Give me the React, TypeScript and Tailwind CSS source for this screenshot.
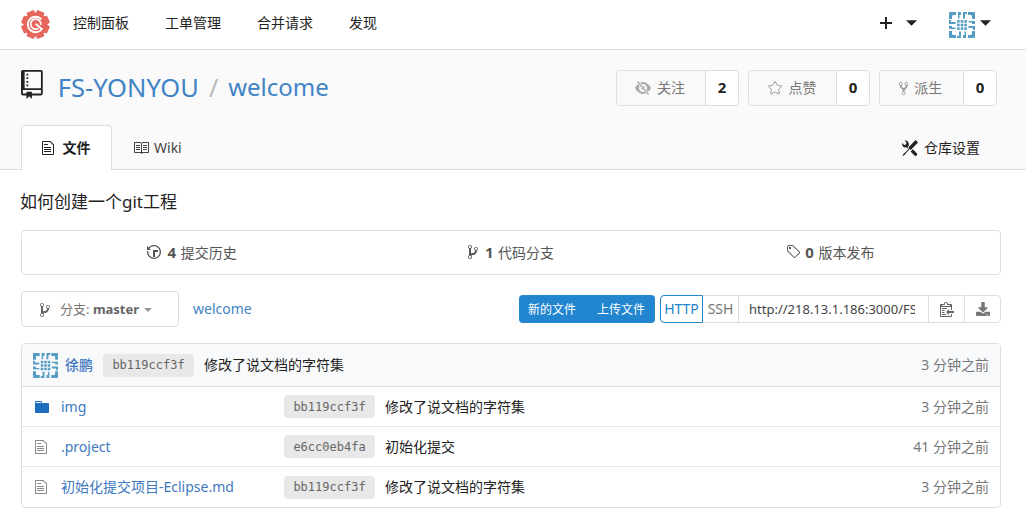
import React from "react";
import { FaDownload } from "react-icons/fa";
import { Star } from "lucide-react";

const P = {
  repo: "M4 9H3V8h1v1zm0-3H3v1h1V6zm0-2H3v1h1V4zm0-2H3v1h1V2zm8-1v12c0 .55-.45 1-1 1H6v2l-1.5-1.5L3 16v-2H1c-.55 0-1-.45-1-1V1c0-.55.45-1 1-1h10c.55 0 1 .45 1 1zm-1 10H1v2h2v-1h3v1h5v-2zm0-10H2v9h9V1z",
  file: "M6 5H2V4h4v1zM2 8h7V7H2v1zm0 2h7V9H2v1zm0 2h7v-1H2v1zm10-7.5V14c0 .55-.45 1-1 1H1c-.55 0-1-.45-1-1V2c0-.55.45-1 1-1h7.5L12 4.5zM11 5L8 2H1v12h10V5z",
  book: "M3 5h4v1H3V5zm0 3h4V7H3v1zm0 2h4V9H3v1zm11-5h-4v1h4V5zm0 2h-4v1h4V7zm0 2h-4v1h4V9zm2-6v9c0 .55-.45 1-1 1H9.5l-1 1-1-1H2c-.55 0-1-.45-1-1V3c0-.55.45-1 1-1h5.5l1 1 1-1H15c.55 0 1 .45 1 1zm-8 .5L7.5 3H2v9h6V3.5zm7-.5H9.5l-.5.5V12h6V3z",
  fork: "M8 1a1.993 1.993 0 0 0-1 3.72V6L5 8 3 6V4.72A1.993 1.993 0 0 0 2 1a1.993 1.993 0 0 0-1 3.72V6.5l3 3v1.78A1.993 1.993 0 0 0 5 15a1.993 1.993 0 0 0 1-3.72V9.5l3-3V4.72A1.993 1.993 0 0 0 8 1zM2 4.2C1.34 4.2.8 3.65.8 3c0-.65.55-1.2 1.2-1.2.65 0 1.2.55 1.2 1.2 0 .65-.55 1.2-1.2 1.2zm3 10c-.66 0-1.2-.55-1.2-1.2 0-.65.55-1.2 1.2-1.2.65 0 1.2.55 1.2 1.2 0 .65-.55 1.2-1.2 1.2zm3-10c-.66 0-1.2-.55-1.2-1.2 0-.65.55-1.2 1.2-1.2.65 0 1.2.55 1.2 1.2 0 .65-.55 1.2-1.2 1.2z",
  branch: "M10 5c0-1.11-.89-2-2-2a1.993 1.993 0 0 0-1 3.72v.3c-.02.52-.23.98-.63 1.38-.4.4-.86.61-1.38.63-.83.02-1.48.16-2 .45V4.72a1.993 1.993 0 0 0-1-3.72C.88 1 0 1.89 0 3a2 2 0 0 0 1 1.72v6.56c-.59.35-1 .99-1 1.72 0 1.11.89 2 2 2 1.11 0 2-.89 2-2 0-.53-.2-1-.53-1.36.09-.06.48-.41.59-.47.25-.11.56-.17.94-.17 1.05-.05 1.95-.45 2.75-1.25S8.95 7.77 9 6.73h-.02C9.59 6.37 10 5.73 10 5zM2 1.8c.66 0 1.2.55 1.2 1.2 0 .65-.55 1.2-1.2 1.2C1.35 4.2.8 3.65.8 3c0-.65.55-1.2 1.2-1.2zm0 12.41c-.66 0-1.2-.55-1.2-1.2 0-.65.55-1.2 1.2-1.2.65 0 1.2.55 1.2 1.2 0 .65-.55 1.2-1.2 1.2zm6-8c-.66 0-1.2-.55-1.2-1.2 0-.65.55-1.2 1.2-1.2.65 0 1.2.55 1.2 1.2 0 .65-.55 1.2-1.2 1.2z",
  history: "M8 13H6V6h5v2H8v5zM7 1C4.81 1 2.87 2.02 1.59 3.59L0 2v4h4L2.5 4.5C3.55 3.17 5.17 2.3 7 2.3c3.14 0 5.7 2.56 5.7 5.7s-2.56 5.7-5.7 5.7A5.71 5.71 0 0 1 1.3 8c0-.34.03-.67.09-1H.08C.03 7.33 0 7.66 0 8c0 3.86 3.14 7 7 7s7-3.14 7-7-3.14-7-7-7z",
  tag: "M7.73 1.73C7.26 1.26 6.62 1 5.96 1H3.5C2.13 1 1 2.13 1 3.5v2.47c0 .66.27 1.3.73 1.77l6.06 6.06c.39.39 1.02.39 1.41 0l4.59-4.59a.996.996 0 0 0 0-1.41L7.73 1.73zM2.38 7.09c-.31-.3-.47-.7-.47-1.13V3.5c0-.88.72-1.59 1.59-1.59h2.47c.42 0 .83.16 1.13.47l6.14 6.13-4.73 4.73-6.13-6.15zM3.01 3h2v2H3V3h.01z",
  tools: "M4.48 7.27c.26.26 1.28 1.33 1.28 1.33l.56-.58-.88-.91 1.69-1.8s-.76-.74-.43-.45c.32-1.19.03-2.51-.87-3.44C4.93.5 3.66.2 2.52.51l1.93 2-.51 1.96-1.89.52-1.93-2C-.19 4.17.1 5.48 1 6.4c.94.98 2.29 1.26 3.48.87zm6.44 1.94l-2.33 2.3 3.84 3.98c.31.33.73.49 1.14.49.41 0 .82-.16 1.14-.49.63-.65.63-1.7 0-2.35l-3.79-3.93zM16 2.53L13.55 0 6.33 7.46l.88.91-4.31 4.46-.99.53-1.39 2.27.35.37 2.2-1.44.51-1.02L7.9 9.08l.88.91L16 2.53z",
  clippy: "M2 13h4v1H2v-1zm5-6H2v1h5V7zm2 3V8l-3 3 3 3v-2h5v-2H9zM4.5 9H2v1h2.5V9zM2 12h2.5v-1H2v1zm9 1h1v2c-.02.28-.11.52-.3.7-.19.18-.42.28-.7.3H1c-.55 0-1-.45-1-1V4c0-.55.45-1 1-1h3c0-1.11.89-2 2-2 1.11 0 2 .89 2 2h3c.55 0 1 .45 1 1v5h-1V6H1v9h10v-2zM2 5h8c0-.55-.45-1-1-1H8c-.55 0-1-.45-1-1s-.45-1-1-1-1 .45-1 1-.45 1-1 1H3c-.55 0-1 .45-1 1z",
  folder: "M13 4H7V3c0-.66-.31-1-1-1H1c-.55 0-1 .45-1 1v10c0 .55.45 1 1 1h12c.55 0 1-.45 1-1V5c0-.55-.45-1-1-1zM6 4H1V3h5v1z",
  plus: "M12 9H7v5H5V9H0V7h5V2h2v5h5v2z",
  eye: "M8.06 2C3 2 0 8 0 8s3 6 8.06 6C13 14 16 8 16 8s-3-6-7.94-6zM8 12c-2.2 0-4-1.78-4-4 0-2.2 1.8-4 4-4 2.22 0 4 1.8 4 4 0 2.22-1.78 4-4 4zm2-4c0 1.11-.89 2-2 2-1.11 0-2-.89-2-2 0-1.11.89-2 2-2 1.11 0 2 .89 2 2z",
};

function Oct({ d, vw, h, className }: { d: string; vw: number; h: number; className?: string }) {
  return (
    <svg viewBox={`0 0 ${vw} 16`} width={(vw * h) / 16} height={h} fill="currentColor" className={`shrink-0 ${className ?? ""}`}>
      <path d={d} />
    </svg>
  );
}

function EyeSlash() {
  return (
    <svg viewBox="0 0 16 16" width="16" height="16" className="shrink-0 text-[#aaa]" fill="currentColor">
      <path d={P.eye} />
      <path d="M2.5 1.5L13.5 14.5" stroke="#f9f9f9" strokeWidth="2.6" />
      <path d="M2.5 1.5L13.5 14.5" stroke="currentColor" strokeWidth="1.2" />
    </svg>
  );
}

function Caret({ className }: { className?: string }) {
  return (
    <svg viewBox="0 0 10 5" className={className} fill="currentColor">
      <path d="M0 0h10L5 5z" />
    </svg>
  );
}

function Logo() {
  const teeth = [0, 45, 90, 135, 180, 225, 270, 315];
  return (
    <svg viewBox="0 0 30 30" width="29" height="29" className="shrink-0">
      <g fill="#e5675c">
        <circle cx="15" cy="15" r="12.4" />
        {teeth.map((a) => (
          <rect key={a} x="10.8" y="0.4" width="8.4" height="6" rx="1.2" transform={`rotate(${a + 22.5} 15 15)`} />
        ))}
      </g>
      <path d="M21.6 19.6A8 8 0 1 1 20.6 9.2" fill="none" stroke="#fff" strokeWidth="1.9" strokeLinecap="round" />
      <path d="M20.4 15.4A5.2 5.2 0 1 0 18 19" fill="none" stroke="#fff" strokeWidth="1.8" />
      <path d="M15.6 14.8L21.4 19.6" fill="none" stroke="#fff" strokeWidth="1.9" strokeLinecap="round" />
    </svg>
  );
}

function Avatar({ size }: { size: number }) {
  const sides = [0, 90, 180, 270];
  const dots = [8.1, 11.7, 15.3];
  return (
    <svg viewBox="0 0 26 26" width={size} height={size} className="shrink-0">
      <g fill="#559dc4">
        {sides.map((a) => (
          <g key={a} transform={`rotate(${a} 13 13)`}>
            <polygon points="0,7 0,1 1,0 7,0 7,3 4,3 3,4 3,7" />
            <polygon points="9,0 12,0 12,3 10.5,3 10.5,6.5 9,6.5" />
            <polygon points="14,0 18,0 18,2 16,2 16,6.5 14,6.5" />
            <polygon points="20,0 25,0 26,1 26,6 24,6 24,3 20,3" />
          </g>
        ))}
        {dots.flatMap((x) => dots.map((y) => <rect key={`${x}-${y}`} x={x} y={y} width="2.6" height="2.6" />))}
      </g>
    </svg>
  );
}

function Counter({ icon, label, n, w, nw }: { icon: React.ReactNode; label: string; n: string; w: string; nw: string }) {
  return (
    <div className="flex h-9 rounded border border-[#dedede] bg-white text-sm">
      <div className={`flex items-center justify-center gap-[6px] rounded-l bg-[#f9f9f9] pr-[2px] text-[#777] ${w}`}>
        {icon}
        <span>{label}</span>
      </div>
      <div className={`flex items-center justify-center border-l border-[#dedede] text-[15px] font-bold text-[#222] ${nw}`}>{n}</div>
    </div>
  );
}

function Sha({ v }: { v: string }) {
  return (
    <span className="flex h-[23px] w-[91px] shrink-0 items-center justify-center rounded bg-[#e8e8e8] text-xs text-[#666] [font-family:'DejaVu_Sans_Mono',monospace]">
      {v}
    </span>
  );
}

function Row({ icon, name, sha, msg, time, last }: { icon: React.ReactNode; name: string; sha: string; msg: string; time: string; last?: boolean }) {
  return (
    <div className={`flex h-10 items-center pl-[13px] pr-[11px] ${last ? "" : "border-b border-[#e8e8e8]"}`}>
      <span className="flex w-[26px] shrink-0 items-center">{icon}</span>
      <span className="w-[223px] shrink-0 text-sm text-[#4078c0]">{name}</span>
      <Sha v={sha} />
      <span className="ml-[10px] text-sm text-[#222]">{msg}</span>
      <span className="ml-auto text-sm text-[#777]">{time}</span>
    </div>
  );
}

export default function App() {
  return (
    <div className="h-[524px] w-[1026px] overflow-hidden bg-white text-[#333] [font-family:'Noto_Sans','Noto_Sans_CJK_SC',sans-serif]">
      <nav className="flex h-[50px] items-center border-b border-[#dedede] pl-[21px] pr-[35px]">
        <Logo />
        <div className="mb-1 ml-[23px] flex gap-9 text-sm text-[#222]">
          <span>控制面板</span>
          <span>工单管理</span>
          <span>合并请求</span>
          <span>发现</span>
        </div>
        <div className="ml-auto flex items-center text-[#222]">
          <span className="-translate-y-0.5"><Oct d={P.plus} vw={12} h={16} /></span>
          <Caret className="mb-1 ml-[14px] h-[6px] w-[11px]" />
          <span className="ml-[32px]"><Avatar size={26} /></span>
          <Caret className="mb-1 ml-[5px] h-[6px] w-[11px]" />
        </div>
      </nav>

      <header className="h-[120px] border-b border-[#dedede] bg-[#fafafa]">
        <div className="flex h-[75px] items-start pl-[21px] pr-[29px] pt-5">
          <Oct d={P.repo} vw={12} h={29} className="text-[#222]" />
          <div className="ml-[15px] flex items-center leading-[34px] text-[#4183c4]">
            <span className="text-[25.5px]">FS-YONYOU</span>
            <span className="mx-[10px] text-[25px] text-[#bbb]">/</span>
            <span className="text-[24px]">welcome</span>
          </div>
          <div className="ml-auto flex gap-[9px]">
            <Counter icon={<EyeSlash />} label="关注" n="2" w="w-[88px]" nw="w-[33px]" />
            <Counter icon={<Star size={16} strokeWidth={1.5} className="text-[#999]" />} label="点赞" n="0" w="w-[87px]" nw="w-[33px]" />
            <Counter icon={<Oct d={P.fork} vw={10} h={15} className="text-[#999]" />} label="派生" n="0" w="w-[83px]" nw="w-[33px]" />
          </div>
        </div>
        <div className="flex h-[45px] items-stretch pl-[21px] pr-[46px]">
          <div className="flex h-[45px] w-[91px] items-center justify-center gap-[9px] rounded-t border border-b-0 border-[#dedede] bg-white pr-px text-sm font-bold text-[#222]">
            <Oct d={P.file} vw={12} h={16} />
            <span>文件</span>
          </div>
          <div className="ml-[21px] flex items-center gap-[5px] text-sm text-[#444]">
            <Oct d={P.book} vw={16} h={16} />
            <span>Wiki</span>
          </div>
          <div className="ml-auto flex items-center gap-[6px] text-sm text-[#222]">
            <Oct d={P.tools} vw={16} h={16} />
            <span>仓库设置</span>
          </div>
        </div>
      </header>

      <main className="pl-[21px] pr-[25px]">
        <p className="-ml-px mt-[20px] h-6 text-[17px] leading-6 text-[#222]">如何创建一个git工程</p>
        <div className="mt-4 grid h-[45px] grid-cols-3 items-center rounded border border-[#dedede] px-[10px] text-sm text-[#555]">
          <div className="flex items-center justify-center gap-[7px]">
            <Oct d={P.history} vw={14} h={16} />
            <span><b className="mr-px text-[15px]">4</b> 提交历史</span>
          </div>
          <div className="flex items-center justify-center gap-[7px]">
            <Oct d={P.branch} vw={10} h={16} />
            <span><b className="mr-px text-[15px]">1</b> 代码分支</span>
          </div>
          <div className="flex items-center justify-center gap-[5px]">
            <Oct d={P.tag} vw={14} h={16} />
            <span><b className="mr-px text-[15px]">0</b> 版本发布</span>
          </div>
        </div>

        <div className="mt-4 flex h-9 items-center">
          <div className="flex h-9 w-[158px] items-center rounded border border-[#dedede] pl-[18px] pt-px text-[13px] text-[#777]">
            <Oct d={P.branch} vw={10} h={16} className="text-[#666]" />
            <span className="ml-[10px]">分支: <b className="text-[#666]">master</b></span>
            <Caret className="ml-[5px] h-1 w-2 text-[#999]" />
          </div>
          <span className="ml-[14px] text-sm text-[#4183c4]">welcome</span>
          <div className="ml-auto flex h-7 w-[136px] items-center rounded bg-[#2185d0] pt-[2px] text-xs text-white">
            <span className="ml-[9px]">新的文件</span>
            <span className="ml-[21px]">上传文件</span>
          </div>
          <div className="ml-[5px] flex h-7 text-sm">
            <span className="flex w-[43px] items-center justify-center rounded-l border border-[#2185d0] bg-white text-[#2185d0]">HTTP</span>
            <span className="flex w-[35px] items-center justify-center border-y border-[#dedede] text-[#777]">SSH</span>
            <span className="flex w-[191px] items-center border border-[#dedede] pl-[10px] pr-[13px] text-[13px] text-[#444]">
              <span className="w-full overflow-hidden whitespace-nowrap">http://218.13.1.186:3000/FS-YONYOU/welcome.git</span>
            </span>
            <span className="flex w-[35px] items-center justify-center border-y border-[#dedede] text-[#666]">
              <Oct d={P.clippy} vw={14} h={16} />
            </span>
            <span className="flex w-[37px] items-center justify-center rounded-r border border-[#dedede] text-[#777]">
              <FaDownload size={14} />
            </span>
          </div>
        </div>

        <div className="mt-4 overflow-hidden rounded border border-[#dedede]">
          <div className="flex h-[43px] items-center border-b border-[#dedede] bg-[#f8f9fb] pl-[11px] pr-[11px]">
            <Avatar size={25} />
            <span className="ml-[7px] text-sm font-medium text-[#4078c0]">徐鹏</span>
            <span className="ml-[10px]"><Sha v="bb119ccf3f" /></span>
            <span className="ml-[10px] text-sm text-[#222]">修改了说文档的字符集</span>
            <span className="ml-auto text-sm text-[#777]">3 分钟之前</span>
          </div>
          <Row icon={<Oct d={P.folder} vw={14} h={16} className="text-[#1e70bf]" />} name="img" sha="bb119ccf3f" msg="修改了说文档的字符集" time="3 分钟之前" />
          <Row icon={<Oct d={P.file} vw={12} h={16} className="text-[#888]" />} name=".project" sha="e6cc0eb4fa" msg="初始化提交" time="41 分钟之前" />
          <Row icon={<Oct d={P.file} vw={12} h={16} className="text-[#888]" />} name="初始化提交项目-Eclipse.md" sha="bb119ccf3f" msg="修改了说文档的字符集" time="3 分钟之前" last />
        </div>
      </main>
    </div>
  );
}
